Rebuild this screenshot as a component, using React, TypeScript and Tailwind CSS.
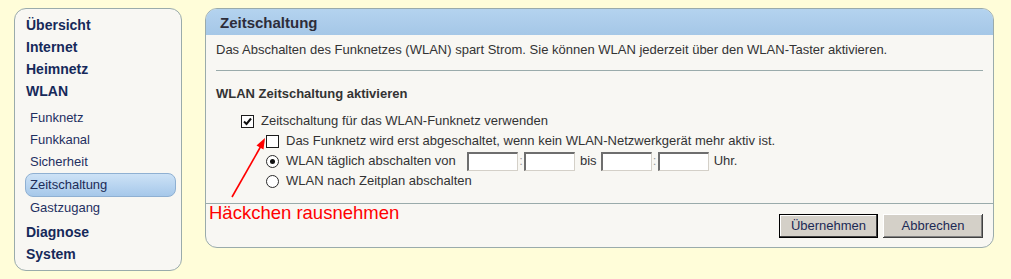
import React from "react";

const font = { fontFamily: '"Liberation Sans", Arial, sans-serif' };

function NavMain({ label, className = "" }: { label: string; className?: string }) {
  return (
    <div className={`h-[22px] pl-[1px] text-[14px] font-bold leading-[22px] text-[#16295a] ${className}`}>
      {label}
    </div>
  );
}

function NavSub({ label, active = false }: { label: string; active?: boolean }) {
  if (active) {
    return (
      <div className="mr-[5px] h-[24px] rounded-[8px] border border-[#8fb0d2] bg-gradient-to-b from-[#cde2f6] to-[#a6c8ea] pl-[4px] text-[13px] leading-[22px] text-[#1c2c58]">
        {label}
      </div>
    );
  }
  return <div className="h-[22px] pl-[5px] text-[13px] leading-[22px] text-[#1f3062]">{label}</div>;
}

function Checkbox({ checked }: { checked: boolean }) {
  return (
    <span className="flex h-[13px] w-[13px] shrink-0 items-center justify-center border border-[#1c1c1c] bg-white">
      {checked && (
        <svg width="11" height="11" viewBox="0 0 11 11">
          <path d="M2 5.5 L4.5 8 L9 2.5" fill="none" stroke="#111" strokeWidth="2" />
        </svg>
      )}
    </span>
  );
}

function Radio({ checked }: { checked: boolean }) {
  return (
    <span className="flex h-[13px] w-[13px] shrink-0 items-center justify-center rounded-full border border-[#2a2a2a] bg-white">
      {checked && <span className="h-[5px] w-[5px] rounded-full bg-[#111]" />}
    </span>
  );
}

function TimeInput() {
  return (
    <span className="h-[19px] w-[51px] border-t-2 border-l-2 border-b border-r border-t-[#6e6e6e] border-l-[#6e6e6e] border-b-[#d4d0c8] border-r-[#d4d0c8] bg-white" />
  );
}

export default function App() {
  return (
    <div style={font} className="relative flex h-[279px] w-[1011px] items-start gap-[23px] bg-[#fffdd9] pt-[8px] pl-[14px]">
      {/* Sidebar */}
      <nav className="h-[263px] w-[168px] rounded-[12px] border border-[#9aabab] bg-[#f8f7f3] pt-[5px] pl-[10px]">
        <NavMain label="Übersicht" />
        <NavMain label="Internet" />
        <NavMain label="Heimnetz" />
        <NavMain label="WLAN" />
        <div className="mt-[5px]">
          <NavSub label="Funknetz" />
          <NavSub label="Funkkanal" />
          <NavSub label="Sicherheit" />
          <NavSub label="Zeitschaltung" active />
          <NavSub label="Gastzugang" />
        </div>
        <NavMain label="Diagnose" className="mt-[2px]" />
        <NavMain label="System" />
      </nav>

      {/* Main panel */}
      <section className="flex h-[240px] w-[789px] flex-col overflow-hidden rounded-[12px] border border-[#9aabab] bg-[#f8f7f3]">
        <div className="h-[26px] shrink-0 bg-gradient-to-b from-[#b4d3ef] to-[#a5c7e7] pl-[14px] text-[15px] font-bold leading-[27px] text-[#2d2d3a]">
          Zeitschaltung
        </div>

        <div className="flex-1 px-[10px] pt-[4px] text-[13px] text-[#333]">
          <p className="h-[22px] leading-[22px]">
            Das Abschalten des Funknetzes (WLAN) spart Strom. Sie können WLAN jederzeit über den WLAN-Taster aktivieren.
          </p>
          <div className="mt-[9px] border-t border-[#9aabab]" />
          <h3 className="mt-[12px] h-[22px] font-bold leading-[22px]">WLAN Zeitschaltung aktivieren</h3>

          <div className="mt-[6px] ml-[25px] flex h-[20px] items-center gap-[7px]">
            <Checkbox checked />
            <span>Zeitschaltung für das WLAN-Funknetz verwenden</span>
          </div>
          <div className="ml-[50px] flex h-[20px] items-center gap-[7px]">
            <Checkbox checked={false} />
            <span>Das Funknetz wird erst abgeschaltet, wenn kein WLAN-Netzwerkgerät mehr aktiv ist.</span>
          </div>
          <div className="ml-[50px] flex h-[20px] items-center">
            <Radio checked />
            <span className="ml-[7px] w-[181px]">WLAN täglich abschalten von</span>
            <TimeInput />
            <span className="w-[6px] text-center text-[#999]">:</span>
            <TimeInput />
            <span className="ml-[5px] mr-[4px]">bis</span>
            <TimeInput />
            <span className="w-[6px] text-center text-[#999]">:</span>
            <TimeInput />
            <span className="ml-[5px]">Uhr.</span>
          </div>
          <div className="ml-[50px] flex h-[20px] items-center gap-[7px]">
            <Radio checked={false} />
            <span>WLAN nach Zeitplan abschalten</span>
          </div>
        </div>

        <div className="flex shrink-0 justify-end gap-[5px] border-t border-[#9aabab] pt-[10px] pr-[10px] pb-[9px]">
          <button className="h-[24px] w-[99px] border border-black bg-[#d4d0c8] text-[13px] text-[#1c2a55] shadow-[inset_-1px_-1px_#404040,inset_1px_1px_#fff]">
            Übernehmen
          </button>
          <button className="h-[24px] w-[100px] bg-[#d4d0c8] text-[13px] text-[#1c2a55] shadow-[inset_-1px_-1px_#404040,inset_1px_1px_#fff,inset_-2px_-2px_#808080]">
            Abbrechen
          </button>
        </div>
      </section>

      {/* Annotation overlay */}
      <div className="absolute top-[202px] left-[209px] text-[18.5px] leading-[22px] text-[#ff0000]">Häckchen rausnehmen</div>
      <svg className="absolute top-0 left-0" width="1011" height="279" style={{ pointerEvents: "none" }}>
        <line x1="232" y1="197" x2="261" y2="146" stroke="#ff0000" strokeWidth="1.6" />
        <polygon points="265,138 256.5,145.5 263.5,149.5" fill="#ff0000" />
      </svg>
    </div>
  );
}
